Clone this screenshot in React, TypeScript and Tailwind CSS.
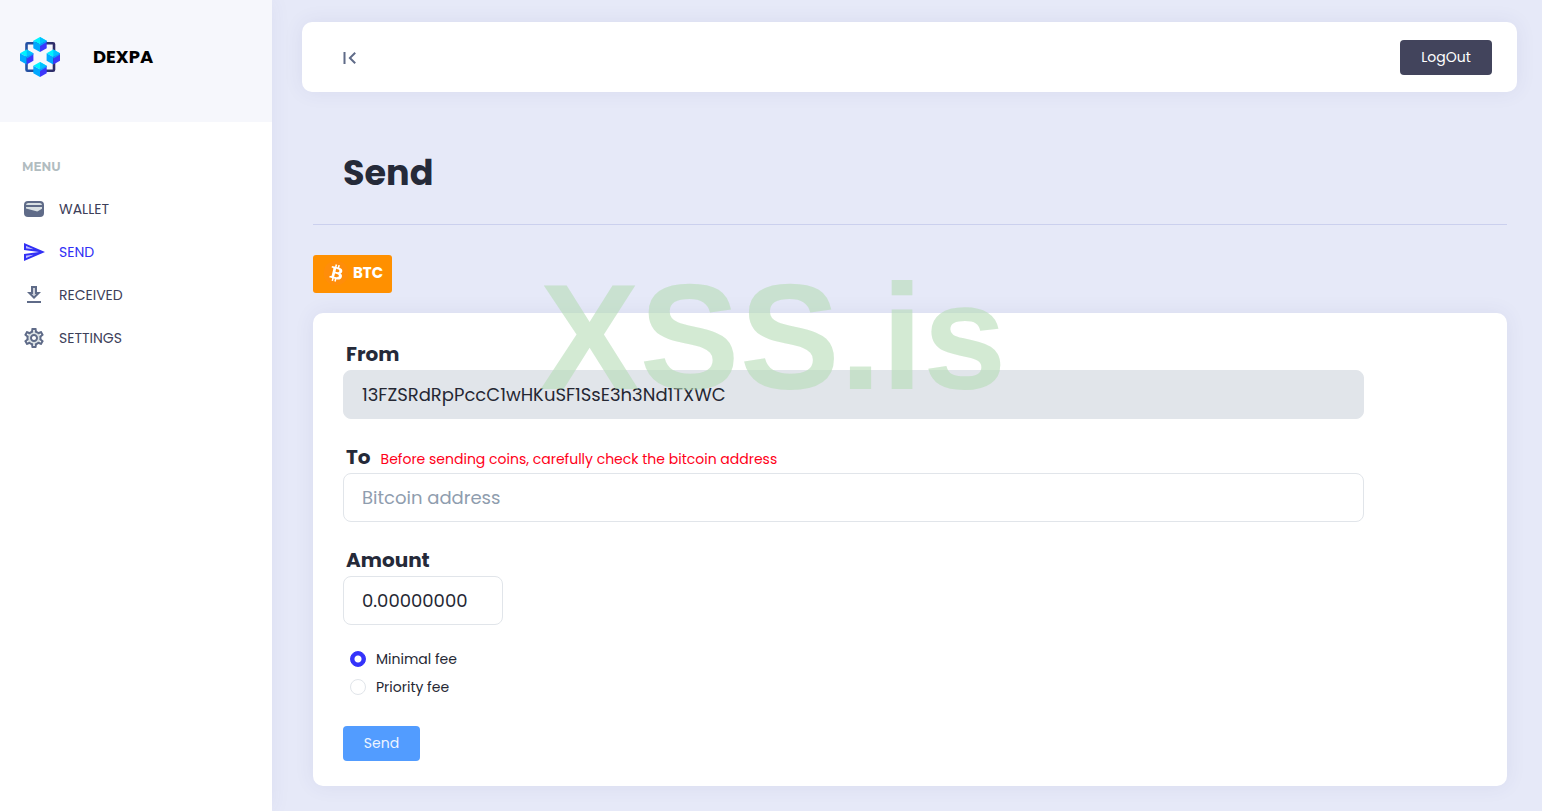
import { useState, type ReactNode } from "react";

function Cube({ x, y }: { x: number; y: number }) {
  return (
    <g transform={`translate(${x} ${y})`}>
      <path d="M0 -7.5 6.7 -3.8 0 0 -6.7 -3.8Z" fill="#00f2ff" />
      <path d="M-6.7 -3.8 0 0V7.5L-6.7 3.8Z" fill="#00a8ff" />
      <path d="M0 -7.5 6.7 -3.8 0 0Z" fill="#00c2ff" />
      <path d="M6.7 -3.8V3.8L0 7.5V0Z" fill="#3c36fb" />
      <path d="M6.7 -3.8V-2.500L0 1.500V0Z" fill="#00a8ff" />
    </g>
  );
}

function Logo() {
  return (
    <svg width="40" height="40" viewBox="0 0 40 40" aria-hidden="true">
      <defs>
        <linearGradient id="frame" x1="0" x2="1">
          <stop offset="0" stopColor="#2352a5" />
          <stop offset="1" stopColor="#2f2c66" />
        </linearGradient>
      </defs>
      <rect x="6.5" y="6.2" width="27.5" height="27.5" rx="1" fill="none" stroke="url(#frame)" strokeWidth="2.6" />
      <Cube x={20} y={7.5} />
      <Cube x={6.7} y={20} />
      <Cube x={33.3} y={20} />
      <Cube x={20} y={32.5} />
    </svg>
  );
}

function WalletIcon() {
  return (
    <svg width="24" height="24" viewBox="0 0 24 24" aria-hidden="true">
      <rect x="2" y="4" width="20" height="16" rx="4" fill="#5f6b88" />
      <path d="M4 8Q4.200 6 6.300 6H17.700Q19.800 6 20 8Z" fill="#d9e0e3" />
      <path d="M4 10H20V11.700L16.200 14.100Q15.400 14.600 14.400 14.300L4 11.600Z" fill="#d9e0e3" />
    </svg>
  );
}

function SendIcon() {
  return (
    <svg width="24" height="24" viewBox="0 0 24 24" fill="#3230f5" aria-hidden="true">
      <path opacity=".3" d="M4 8.250l7.510 1-7.500-3.220zM4.010 17.970l7.510-3.220-7.510 1z" />
      <path d="M2.010 3 2 10l15 2-15 2 .010 7L23 12 2.010 3zM4 8.250V6.030l7.510 3.220-7.510-1zm.010 9.720v-2.220l7.510-1-7.510 3.220z" />
    </svg>
  );
}

function ReceivedIcon() {
  return (
    <svg width="24" height="24" viewBox="0 0 24 24" fill="#5f6b88" aria-hidden="true">
      <path opacity=".3" d="M13 9V5h-2v6H9.830L12 13.170 14.170 11H13z" />
      <path d="M19 9h-4V3H9v6H5l7 7 7-7zm-8 2V5h2v6h1.170L12 13.170 9.830 11H11zm-6 7h14v2H5z" />
    </svg>
  );
}

function SettingsIcon() {
  return (
    <svg width="24" height="24" viewBox="0 0 24 24" fill="#5f6b88" aria-hidden="true">
      <circle cx="12" cy="12" r="7" fill="#d9e0e3" />
      <circle cx="12" cy="12" r="3" fill="#fff" />
      <path d="M19.430 12.980c.040-.320.070-.640.070-.980 0-.340-.030-.660-.070-.980l2.110-1.650c.190-.150.240-.420.120-.640l-2-3.460c-.090-.160-.260-.250-.440-.250-.060 0-.120.010-.170.030l-2.490 1c-.520-.400-1.080-.730-1.690-.980l-.380-2.650C14.460 2.180 14.250 2 14 2h-4c-.250 0-.460.180-.490.420l-.380 2.650c-.610.250-1.170.590-1.690.980l-2.490-1c-.060-.020-.120-.030-.180-.030-.170 0-.340.090-.430.250l-2 3.460c-.130.220-.070.490.120.640l2.110 1.650c-.040.320-.070.650-.070.980 0 .330.030.660.070.980l-2.110 1.650c-.190.150-.240.420-.120.640l2 3.460c.090.160.260.250.440.250.060 0 .120-.010.170-.030l2.490-1c.520.400 1.080.730 1.690.980l.380 2.650c.030.240.240.420.490.420h4c.250 0 .460-.180.490-.420l.380-2.650c.610-.250 1.170-.590 1.690-.980l2.490 1c.060.020.120.030.180.030.170 0 .340-.090.430-.250l2-3.460c.120-.220.070-.490-.120-.640l-2.110-1.650zm-1.980-1.710c.040.310.050.520.050.730 0 .210-.020.430-.050.730l-.140 1.130.890.700 1.080.840-.700 1.210-1.270-.510-1.040-.420-.900.680c-.430.320-.840.560-1.250.730l-1.060.430-.160 1.130-.200 1.350h-1.400l-.190-1.350-.160-1.130-1.060-.430c-.430-.180-.830-.410-1.230-.710l-.910-.700-1.060.430-1.270.510-.700-1.210 1.080-.840.890-.700-.140-1.130c-.030-.310-.050-.540-.050-.740s.020-.430.050-.730l.140-1.130-.890-.700-1.080-.840.700-1.210 1.270.510 1.040.420.900-.680c.430-.320.840-.560 1.250-.730l1.060-.430.160-1.130.200-1.350h1.390l.190 1.350.160 1.130 1.060.430c.430.180.830.410 1.230.710l.910.700 1.060-.430 1.270-.510.700 1.210-1.070.850-.890.700.140 1.130zM12 8c-2.210 0-4 1.790-4 4s1.790 4 4 4 4-1.790 4-4-1.790-4-4-4zm0 6c-1.100 0-2-.900-2-2s.900-2 2-2 2 .900 2 2-.900 2-2 2z" />
    </svg>
  );
}

function BitcoinIcon() {
  return (
    <svg width="28" height="28" viewBox="0 0 32 32" aria-hidden="true">
      <circle cx="16" cy="16" r="14" fill="#ff8d0a" />
      <path
        fill="#fff"
        d="M23.189 14.020c.314-2.096-1.283-3.223-3.465-3.975l.708-2.840-1.728-.430-.690 2.765c-.454-.114-.920-.220-1.385-.326l.695-2.783L15.596 6l-.708 2.839c-.376-.086-.746-.170-1.104-.260l.002-.009-2.384-.595-.460 1.846s1.283.294 1.256.312c.700.175.826.638.805 1.006l-.806 3.235c.048.012.110.030.180.057l-.183-.045-1.130 4.532c-.086.212-.303.531-.793.410.018.025-1.256-.313-1.256-.313l-.858 1.978 2.250.561c.418.105.828.215 1.231.318l-.715 2.872 1.727.430.708-2.840c.472.127.930.245 1.378.357l-.706 2.828 1.728.430.715-2.866c2.948.558 5.164.333 6.097-2.333.752-2.146-.037-3.385-1.588-4.192 1.130-.260 1.980-1.003 2.207-2.538zm-3.950 5.538c-.533 2.147-4.148.986-5.320.695l.950-3.805c1.172.293 4.929.872 4.370 3.110zm.535-5.569c-.487 1.953-3.495.960-4.470.717l.860-3.450c.975.243 4.118.696 3.610 2.733z"
      />
    </svg>
  );
}

function NavItem({ icon, label, active = false }: { icon: ReactNode; label: string; active?: boolean }) {
  return (
    <li>
      <a
        href="#"
        aria-current={active ? "page" : undefined}
        className={`flex h-[43px] items-center gap-[13px] text-sm ${active ? "text-[#3230f5]" : "text-[#3d4059]"}`}
      >
        {icon}
        {label}
      </a>
    </li>
  );
}

const inputClass =
  "block h-[49px] rounded-lg border border-[#e1e5ea] px-[18px] text-lg text-[#252733] outline-none placeholder:text-[#8f9dae]";
const labelClass = "pl-[3px] text-xl leading-8 font-bold text-[#252a39]";

export default function App() {
  const [fee, setFee] = useState("minimal");
  const [to, setTo] = useState("");
  const [amount, setAmount] = useState("0.00000000");
  const [open, setOpen] = useState(true);

  const fees = [
    { id: "minimal", label: "Minimal fee" },
    { id: "priority", label: "Priority fee" },
  ];

  return (
    <div className="relative flex min-h-screen bg-[#e6e9f8] font-['Poppins','Inter',sans-serif] text-[#252733]">
      {open && (
        <aside className="w-[272px] shrink-0 bg-white shadow-[0_0_20px_rgba(60,70,130,0.06)]">
          <div className="flex h-[122px] items-start gap-[33px] bg-[#f6f7fc] px-5 pt-[37px]">
            <Logo />
            <span className="text-lg leading-10 font-bold text-black">DEXPA</span>
          </div>
          <nav aria-label="Menu" className="px-[22px] pt-9">
            <h2 className="font-['Montserrat','Poppins','Inter',sans-serif] text-xs leading-[18px] font-bold text-[#b1bcc0]">
              MENU
            </h2>
            <ul className="pt-[11px]">
              <NavItem icon={<WalletIcon />} label="WALLET" />
              <NavItem icon={<SendIcon />} label="SEND" active />
              <NavItem icon={<ReceivedIcon />} label="RECEIVED" />
              <NavItem icon={<SettingsIcon />} label="SETTINGS" />
            </ul>
          </nav>
        </aside>
      )}

      <div className="min-w-0 flex-1 pt-[22px] pr-[25px] pb-[25px] pl-[30px]">
        <header className="flex h-[70px] items-center justify-between rounded-[10px] bg-white pr-[25px] pl-9 shadow-[0_0_20px_rgba(60,70,130,0.08)]">
          <button type="button" aria-label="Toggle menu" onClick={() => setOpen(!open)}>
            <svg width="24" height="26" viewBox="0 -1 24 26" fill="#5f6b88" aria-hidden="true">
              <path transform="translate(-.5 1)" d="M18.410 16.590L13.820 12l4.590-4.590L17 6l-6 6 6 6zM6 6h2v12H6z" />
            </svg>
          </button>
          <button type="button" className="h-[35px] w-[92px] rounded bg-[#42445c] text-sm text-white">
            LogOut
          </button>
        </header>

        <main className="pt-[52px] pr-[10px] pl-[11px]">
          <h1 className="pl-[30px] text-[35px] leading-[58px] font-bold text-[#252a39]">Send</h1>
          <hr className="mt-[22px] border-[#cbd0ee]" />
          <div className="mt-[30px]">
            <button
              type="button"
              className="flex h-[38px] w-[79px] items-center justify-center gap-[3px] rounded-[3px] bg-[#ff9000] pb-[2px] text-[15px] leading-5 font-bold text-white"
            >
              <BitcoinIcon />
              BTC
            </button>
          </div>

          <form
            onSubmit={(e) => e.preventDefault()}
            className="mt-5 rounded-[10px] bg-white px-[30px] pt-[25px] pb-[25px] shadow-[0_0_20px_rgba(60,70,130,0.08)]"
          >
            <div>
              <label htmlFor="from" className={`block ${labelClass}`}>
                From
              </label>
              <input
                id="from"
                readOnly
                value="13FZSRdRpPccC1wHKuSF1SsE3h3Nd1TXWC"
                className={`w-[90%] bg-[#e1e5ea] ${inputClass}`}
              />
            </div>
            <div className="mt-[22px]">
              <div className="flex items-baseline gap-[10px]">
                <label htmlFor="to" className={labelClass}>
                  To
                </label>
                <span id="to-hint" className="text-sm text-[#ff0019]">
                  Before sending coins, carefully check the bitcoin address
                </span>
              </div>
              <input
                id="to"
                aria-describedby="to-hint"
                placeholder="Bitcoin address"
                value={to}
                onChange={(e) => setTo(e.target.value)}
                className={`w-[90%] bg-white ${inputClass}`}
              />
            </div>
            <div className="mt-[22px]">
              <label htmlFor="amount" className={`block ${labelClass}`}>
                Amount
              </label>
              <input
                id="amount"
                value={amount}
                onChange={(e) => setAmount(e.target.value)}
                className={`w-[160px] bg-white ${inputClass}`}
              />
            </div>
            <fieldset className="mt-5 pl-[7px]">
              {fees.map((f) => (
                <label key={f.id} className="flex h-7 items-center gap-[10px] text-sm">
                  <input
                    type="radio"
                    name="fee"
                    value={f.id}
                    checked={fee === f.id}
                    onChange={() => setFee(f.id)}
                    className="size-4 appearance-none rounded-full border border-[#e1e5ea] bg-white checked:border-[#3433fb] checked:bg-[radial-gradient(circle,#fff_3px,#3433fb_4px)]"
                  />
                  {f.label}
                </label>
              ))}
            </fieldset>
            <button
              type="submit"
              className="mt-[25px] block h-[35px] w-[77px] rounded bg-[#529cff] pb-px text-sm text-[#edf4ff]"
            >
              Send
            </button>
          </form>
        </main>
      </div>

      <div className="pointer-events-none absolute inset-x-0 top-[249px] pl-1 text-center font-['Liberation_Sans',sans-serif] text-[150px] leading-[176px] font-bold text-[rgba(182,220,182,0.6)]">
        XSS.is
      </div>
    </div>
  );
}
